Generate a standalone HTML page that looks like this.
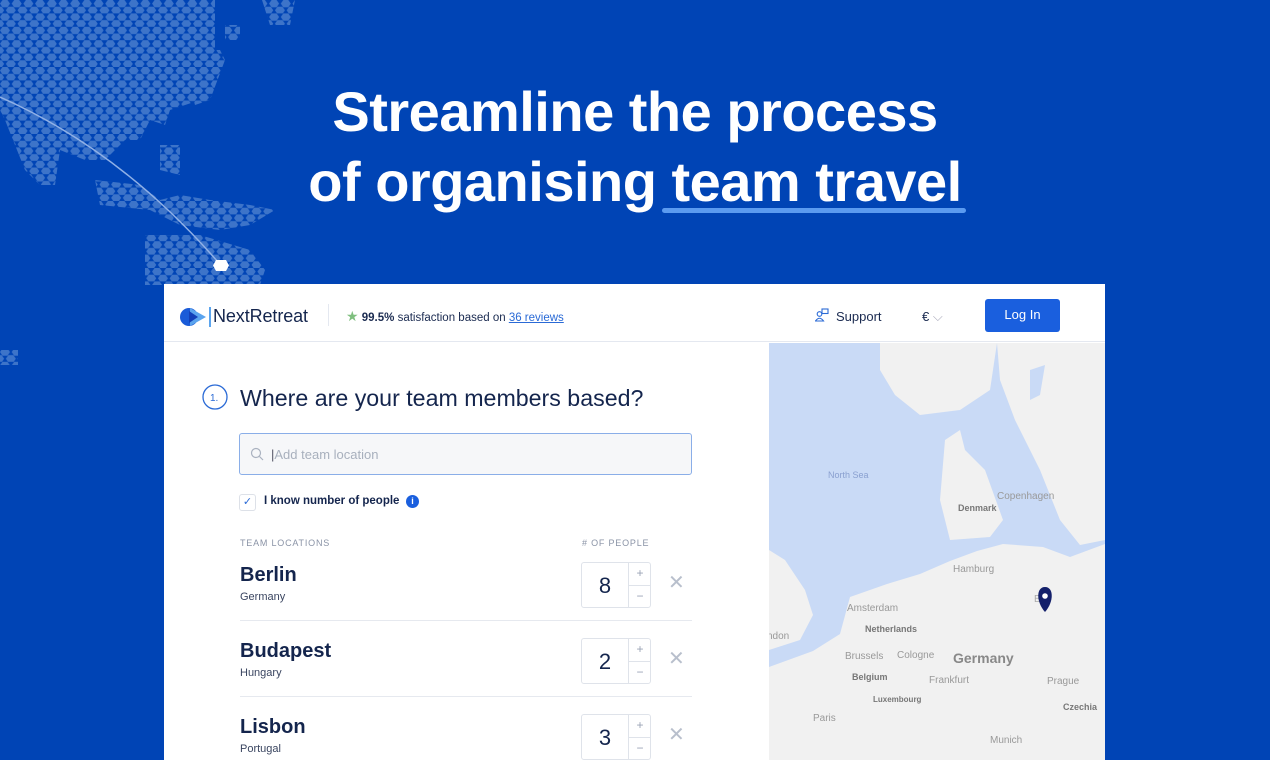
<!DOCTYPE html>
<html><head><meta charset="utf-8"><style>
*{margin:0;padding:0;box-sizing:border-box}
body{width:1270px;height:760px;overflow:hidden;background:#0044b5;font-family:"Liberation Sans",sans-serif;position:relative}
.h1{position:absolute;left:0;width:1270px;text-align:center;color:#fff;font-weight:bold;font-size:56px;letter-spacing:-0.5px;line-height:68px}
.card{position:absolute;left:164px;top:284px;width:941px;height:476px;background:#fff;overflow:hidden}
.hdr{height:58px;border-bottom:1px solid #e4e8f0;position:relative}
.abs{position:absolute}
.nav{font-size:13px;color:#1a2a50}
.row{position:absolute;left:76px;width:452px;height:57px;border-bottom:1px solid #e6e9ef}
.city{position:absolute;left:0;top:0;font-size:20px;font-weight:bold;color:#14254d}
.ctry{position:absolute;left:0;top:27px;font-size:11px;color:#3a4560}
.num{position:absolute;left:341px;top:-2px;width:70px;height:46px;border:1px solid #dfe3ea;border-radius:3px}
.num .v{position:absolute;left:0;width:46px;top:10px;text-align:center;font-size:22px;color:#14254d}
.num .pm{position:absolute;left:46px;width:23px;height:22px;border-left:1px solid #dfe3ea;text-align:center;font-size:12px;color:#9aa3b5;line-height:20px}
.x{position:absolute;left:428px;top:6px;font-size:20px;color:#b8bfcc;font-weight:300}
</style></head><body>
<svg class="abs" style="left:0;top:0" width="300" height="370">
<defs>
<pattern id="hx" width="11.7" height="13.4" patternUnits="userSpaceOnUse">
<polygon points="2.5,0 7.5,0 10,3.65 7.5,7.3 2.5,7.3 0,3.65" fill="#3d74c9"/>
<polygon points="8.35,6.7 13.35,6.7 15.85,10.35 13.35,14 8.35,14 5.85,10.35" fill="#3d74c9"/>
<polygon points="-3.35,6.7 1.65,6.7 4.15,10.35 1.65,14 -3.35,14 -5.85,10.35" fill="#3d74c9"/>
</pattern>
<clipPath id="cp"><polygon points="0,0 215,0 215,50 205,55 200,100 170,110 165,125 150,120 140,140 125,140 115,150 105,160 85,160 60,150 55,185 40,185 25,170 5,120 0,110"/>
<polygon points="262,0 295,0 290,25 270,25"/>
<polygon points="225,25 240,25 240,40 225,40"/>
<polygon points="180,50 220,50 225,60 210,100 195,105"/>
<polygon points="160,145 180,145 180,175 160,170"/>
<polygon points="95,180 140,185 160,200 180,195 210,200 250,205 275,210 250,225 220,230 180,225 150,210 100,205"/>
<polygon points="145,235 200,235 250,250 265,270 260,285 145,285"/>
<polygon points="0,350 18,350 18,365 0,365"/>
</clipPath>
</defs>
<rect width="300" height="370" fill="url(#hx)" clip-path="url(#cp)"/>
<path d="M0,97 Q120,150 218,262" stroke="#8fb0e6" stroke-width="1.5" fill="none"/>
<polygon points="216,260 226,260 229,265.5 226,271 216,271 213,265.5" fill="#fff"/>
</svg>
<div class="h1" style="top:78px">Streamline the process</div>
<div class="h1" style="top:148px">of organising team travel</div>
<div class="abs" style="left:662px;top:208px;width:304px;height:5px;border-radius:3px;background:#5b9bf0"></div>

<div class="card">
<div class="hdr">
<svg class="abs" style="left:16px;top:23px" width="32" height="20"><circle cx="9" cy="10" r="9" fill="#1a5bd8"/><path d="M10 1 L26 10 L10 19 Z" fill="#5ba4ee"/><path d="M9 4 L18 10 L9 16 Z" fill="#1340b8"/><rect x="29" y="0" width="2" height="20" fill="#5ba4ee"/></svg>
<div class="abs" style="left:49px;top:22px;font-size:18px;color:#14254d;letter-spacing:-0.1px">NextRetreat</div>
<div class="abs" style="left:164px;top:20px;width:1px;height:22px;background:#e4e8f0"></div>
<div class="abs nav" style="left:182px;top:24px;font-size:11.5px"><span style="color:#7fbf7f;font-size:14px">★</span> <b>99.5%</b> satisfaction based on <span style="color:#2a6ad6;text-decoration:underline">36 reviews</span></div>
<svg class="abs" style="left:651px;top:24px" width="14" height="14"><circle cx="4.5" cy="6" r="2.3" fill="none" stroke="#2a6ad6" stroke-width="1.1"/><path d="M0.5 13 Q4.5 7.5 8.5 13 Z" fill="none" stroke="#2a6ad6" stroke-width="1.1"/><rect x="7" y="1" width="6" height="4.5" fill="none" stroke="#2a6ad6" stroke-width="1.1"/></svg>
<div class="abs nav" style="left:672px;top:25px">Support</div>
<div class="abs nav" style="left:758px;top:25px">€ <span style="color:#aab">⌵</span></div>
<div class="abs" style="left:821px;top:15px;width:75px;height:33px;background:#1a5fde;border-radius:3px;color:#fff;font-size:13px;text-align:center;line-height:32px">Log In</div>
</div>
<svg class="abs" style="left:605px;top:59px" width="336" height="417" viewBox="769 343 336 417">
<rect x="769" y="343" width="336" height="417" fill="#c9daf6"/>
<path d="M880,343 L997,343 L990,390 L960,410 L920,415 L895,395 L880,370 Z" fill="#f1f1f1"/>
<path d="M997,343 L1105,343 L1105,540 L1080,545 L1060,520 L1040,470 L1015,420 L1000,380 Z" fill="#f1f1f1"/>
<path d="M1030,370 L1045,365 L1040,395 L1030,400 Z" fill="#c9daf6"/>
<path d="M945,440 L960,430 L965,450 L985,470 L1003,520 L990,537 L950,540 L940,500 Z" fill="#f1f1f1"/>
<path d="M769,760 L769,667 L813,651 L840,634 L850,597 L887,584 L920,574 L950,561 L977,551 L1003,544 L1043,547 L1070,557 L1105,544 L1105,760 Z" fill="#f1f1f1"/>
<path d="M769,550 L785,560 L805,590 L813,615 L800,640 L769,650 Z" fill="#f1f1f1"/>
<g font-family="Liberation Sans" font-size="10" fill="#999"><text x="828" y="478" fill="#8aa0d0" font-size="9">North Sea</text><text x="997" y="499">Copenhagen</text><text x="958" y="511" font-weight="bold" fill="#777" font-size="9">Denmark</text><text x="953" y="572">Hamburg</text><text x="847" y="611">Amsterdam</text><text x="865" y="632" font-weight="bold" fill="#777" font-size="9">Netherlands</text><text x="767" y="639">ndon</text><text x="845" y="659">Brussels</text><text x="897" y="658">Cologne</text><text x="953" y="663" font-size="14" font-weight="bold" fill="#888">Germany</text><text x="852" y="680" font-weight="bold" fill="#777" font-size="9">Belgium</text><text x="929" y="683">Frankfurt</text><text x="873" y="702" font-weight="bold" fill="#777" font-size="8">Luxembourg</text><text x="1047" y="684">Prague</text><text x="1063" y="710" font-weight="bold" fill="#777" font-size="9">Czechia</text><text x="813" y="721">Paris</text><text x="990" y="743">Munich</text><text x="1034" y="602" fill="#aaa">B</text></g>
<path d="M1045,612 C1036,602 1036,587 1045,587 C1054,587 1054,602 1045,612Z" fill="#14206b"/><circle cx="1045" cy="596" r="2.8" fill="#fff"/>
</svg>
<svg class="abs" style="left:38px;top:100px" width="28" height="28"><circle cx="13" cy="13" r="12" fill="none" stroke="#2a6ad6" stroke-width="1.3"/><text x="8" y="17" font-size="10" fill="#2a6ad6" font-family="Liberation Sans">1.</text></svg>
<div class="abs" style="left:76px;top:101px;font-size:23.2px;color:#14254d">Where are your team members based?</div>
<div class="abs" style="left:75px;top:149px;width:453px;height:42px;border:1px solid #8aaee8;border-radius:3px;background:#f6f7f9"></div>
<svg class="abs" style="left:86px;top:163px" width="14" height="14"><circle cx="6" cy="6" r="4.5" fill="none" stroke="#aab2c0" stroke-width="1.2"/><path d="M9.5 9.5 L13 13" stroke="#aab2c0" stroke-width="1.2"/></svg>
<div class="abs" style="left:107px;top:163px;font-size:13px;color:#a8b0bd"><span style="color:#556">|</span>Add team location</div>
<div class="abs" style="left:75px;top:210px;width:17px;height:17px;border:1px solid #dde1e8;border-radius:3px;color:#2a6ad6;font-size:11px;text-align:center;line-height:15px">✓</div>
<div class="abs" style="left:100px;top:211px;font-size:11.5px;color:#14254d;font-weight:bold">I know number of people</div>
<div class="abs" style="left:242px;top:211px;width:13px;height:13px;border-radius:50%;background:#1a5fde;color:#fff;font-size:9px;text-align:center;line-height:13px;font-weight:bold">i</div>
<div class="abs" style="left:76px;top:254px;font-size:9px;color:#8a93a6;letter-spacing:0.8px">TEAM LOCATIONS</div>
<div class="abs" style="left:418px;top:254px;font-size:9px;color:#8a93a6;letter-spacing:0.8px"># OF PEOPLE</div>
<div class="row" style="top:280px"><div class="city">Berlin</div><div class="ctry">Germany</div><div class="num"><div class="v">8</div><div class="pm" style="top:0">+</div><div class="pm" style="top:22px;border-top:1px solid #dfe3ea">−</div></div><div class="x">✕</div></div>
<div class="row" style="top:356px"><div class="city">Budapest</div><div class="ctry">Hungary</div><div class="num"><div class="v">2</div><div class="pm" style="top:0">+</div><div class="pm" style="top:22px;border-top:1px solid #dfe3ea">−</div></div><div class="x">✕</div></div>
<div class="row" style="top:432px;border:none"><div class="city">Lisbon</div><div class="ctry">Portugal</div><div class="num"><div class="v">3</div><div class="pm" style="top:0">+</div><div class="pm" style="top:22px;border-top:1px solid #dfe3ea">−</div></div><div class="x">✕</div></div>
</div>
</body></html>
